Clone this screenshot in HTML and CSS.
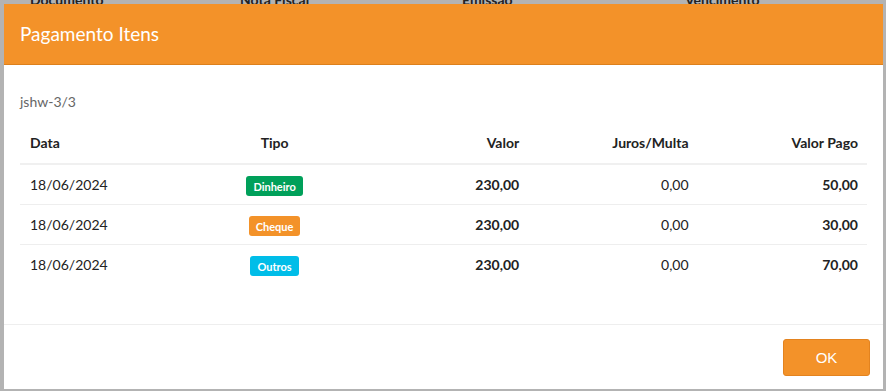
FILE: index.html
```html
<!DOCTYPE html>
<html lang="pt-BR">
<head>
    <meta charset="UTF-8">
    <meta name="viewport" content="width=device-width, initial-scale=1.0">
    <title>Pagamento Itens</title>
    <link rel="stylesheet" href="styles.css">
</head>
<body>
    <div class="page">
        <table class="grid">
            <tr>
                <th class="col-doc">Documento</th>
                <th class="col-nf">Nota Fiscal</th>
                <th class="col-em">Emissão</th>
                <th>Vencimento</th>
            </tr>
        </table>
    </div>

    <div class="overlay">
        <div class="modal">
            <div class="modal-header">
                <h4 class="modal-title">Pagamento Itens</h4>
            </div>
            <div class="modal-body">
                <p class="ref">jshw-3/3</p>
                <table class="items">
                    <thead>
                        <tr>
                            <th>Data</th>
                            <th class="center">Tipo</th>
                            <th class="right">Valor</th>
                            <th class="right">Juros/Multa</th>
                            <th class="right">Valor Pago</th>
                        </tr>
                    </thead>
                    <tbody>
                        <tr>
                            <td>18/06/2024</td>
                            <td class="center"><span class="label label-green">Dinheiro</span></td>
                            <td class="right bold">230,00</td>
                            <td class="right">0,00</td>
                            <td class="right bold">50,00</td>
                        </tr>
                        <tr>
                            <td>18/06/2024</td>
                            <td class="center"><span class="label label-orange">Cheque</span></td>
                            <td class="right bold">230,00</td>
                            <td class="right">0,00</td>
                            <td class="right bold">30,00</td>
                        </tr>
                        <tr>
                            <td>18/06/2024</td>
                            <td class="center"><span class="label label-blue">Outros</span></td>
                            <td class="right bold">230,00</td>
                            <td class="right">0,00</td>
                            <td class="right bold">70,00</td>
                        </tr>
                    </tbody>
                </table>
            </div>
            <div class="modal-footer">
                <button class="btn-ok">OK</button>
            </div>
        </div>
    </div>
</body>
</html>
```

FILE: styles.css
```css
body {
    margin: 0;
    background-color: #b3b3b3;
    font-family: Lato, "Open Sans", sans-serif;
    font-size: 14px;
    color: #333;
    height: 391px;
    overflow: hidden;
}
.page {
    margin-top: -11px;
}
.grid {
    width: 100%;
    border-collapse: collapse;
    table-layout: fixed;
}
.grid th {
    text-align: left;
    padding: 0 0 0 30px;
    height: 20px;
    color: #222;
}
.grid .col-doc {
    width: 180px;
}
.grid .col-nf {
    width: 192px;
}
.grid .col-em {
    width: 193px;
}
.overlay {
    position: fixed;
    inset: 0;
    padding: 4px 3px 2px 4px;
    box-sizing: border-box;
}
.modal {
    background-color: #fff;
    height: 385px;
    display: flex;
    flex-direction: column;
}
.modal-header {
    background-color: #f39229;
    border-bottom: 1px solid #dd801c;
    padding: 15px 16px;
}
.modal-title {
    margin: 0;
    color: #fff;
    font-size: 19px;
    font-weight: 400;
    line-height: 30px;
}
.modal-body {
    padding: 25px 16px 20px;
}
.ref {
    margin: 0 0 9px;
    line-height: 24px;
    color: #666;
}
.items {
    width: 100%;
    border-collapse: collapse;
    table-layout: fixed;
    margin-bottom: 20px;
}
.items th,
.items td {
    padding: 8px 9px 8px 10px;
    line-height: 24px;
    text-align: left;
}
.items td {
    padding-bottom: 7px;
    color: #222;
}
.items th {
    font-weight: 700;
    color: #222;
    border-bottom: 2px solid #f0f0f0;
}
.items tbody tr + tr td {
    border-top: 1px solid #eee;
}
.items .center {
    text-align: center;
}
.items .right {
    text-align: right;
}
.bold {
    font-weight: 700;
}
.label {
    display: inline-block;
    padding: 3px 7px 2px;
    border-radius: 3px;
    font-size: 11px;
    font-weight: 700;
    line-height: 15px;
    color: #fff;
    vertical-align: middle;
}
.label-green {
    background-color: #00a05a;
}
.label-orange {
    background-color: #f39229;
}
.label-blue {
    background-color: #00bde8;
}
.modal-footer {
    border-top: 1px solid #eee;
    padding: 14px 13px 12px;
    display: flex;
    justify-content: flex-end;
}
.btn-ok {
    width: 87px;
    height: 37px;
    background-color: #f39229;
    border: 1px solid #e3831f;
    border-radius: 3px;
    color: #fff;
    font-family: "Liberation Sans", Arial, sans-serif;
    font-size: 15px;
    cursor: pointer;
}
```
